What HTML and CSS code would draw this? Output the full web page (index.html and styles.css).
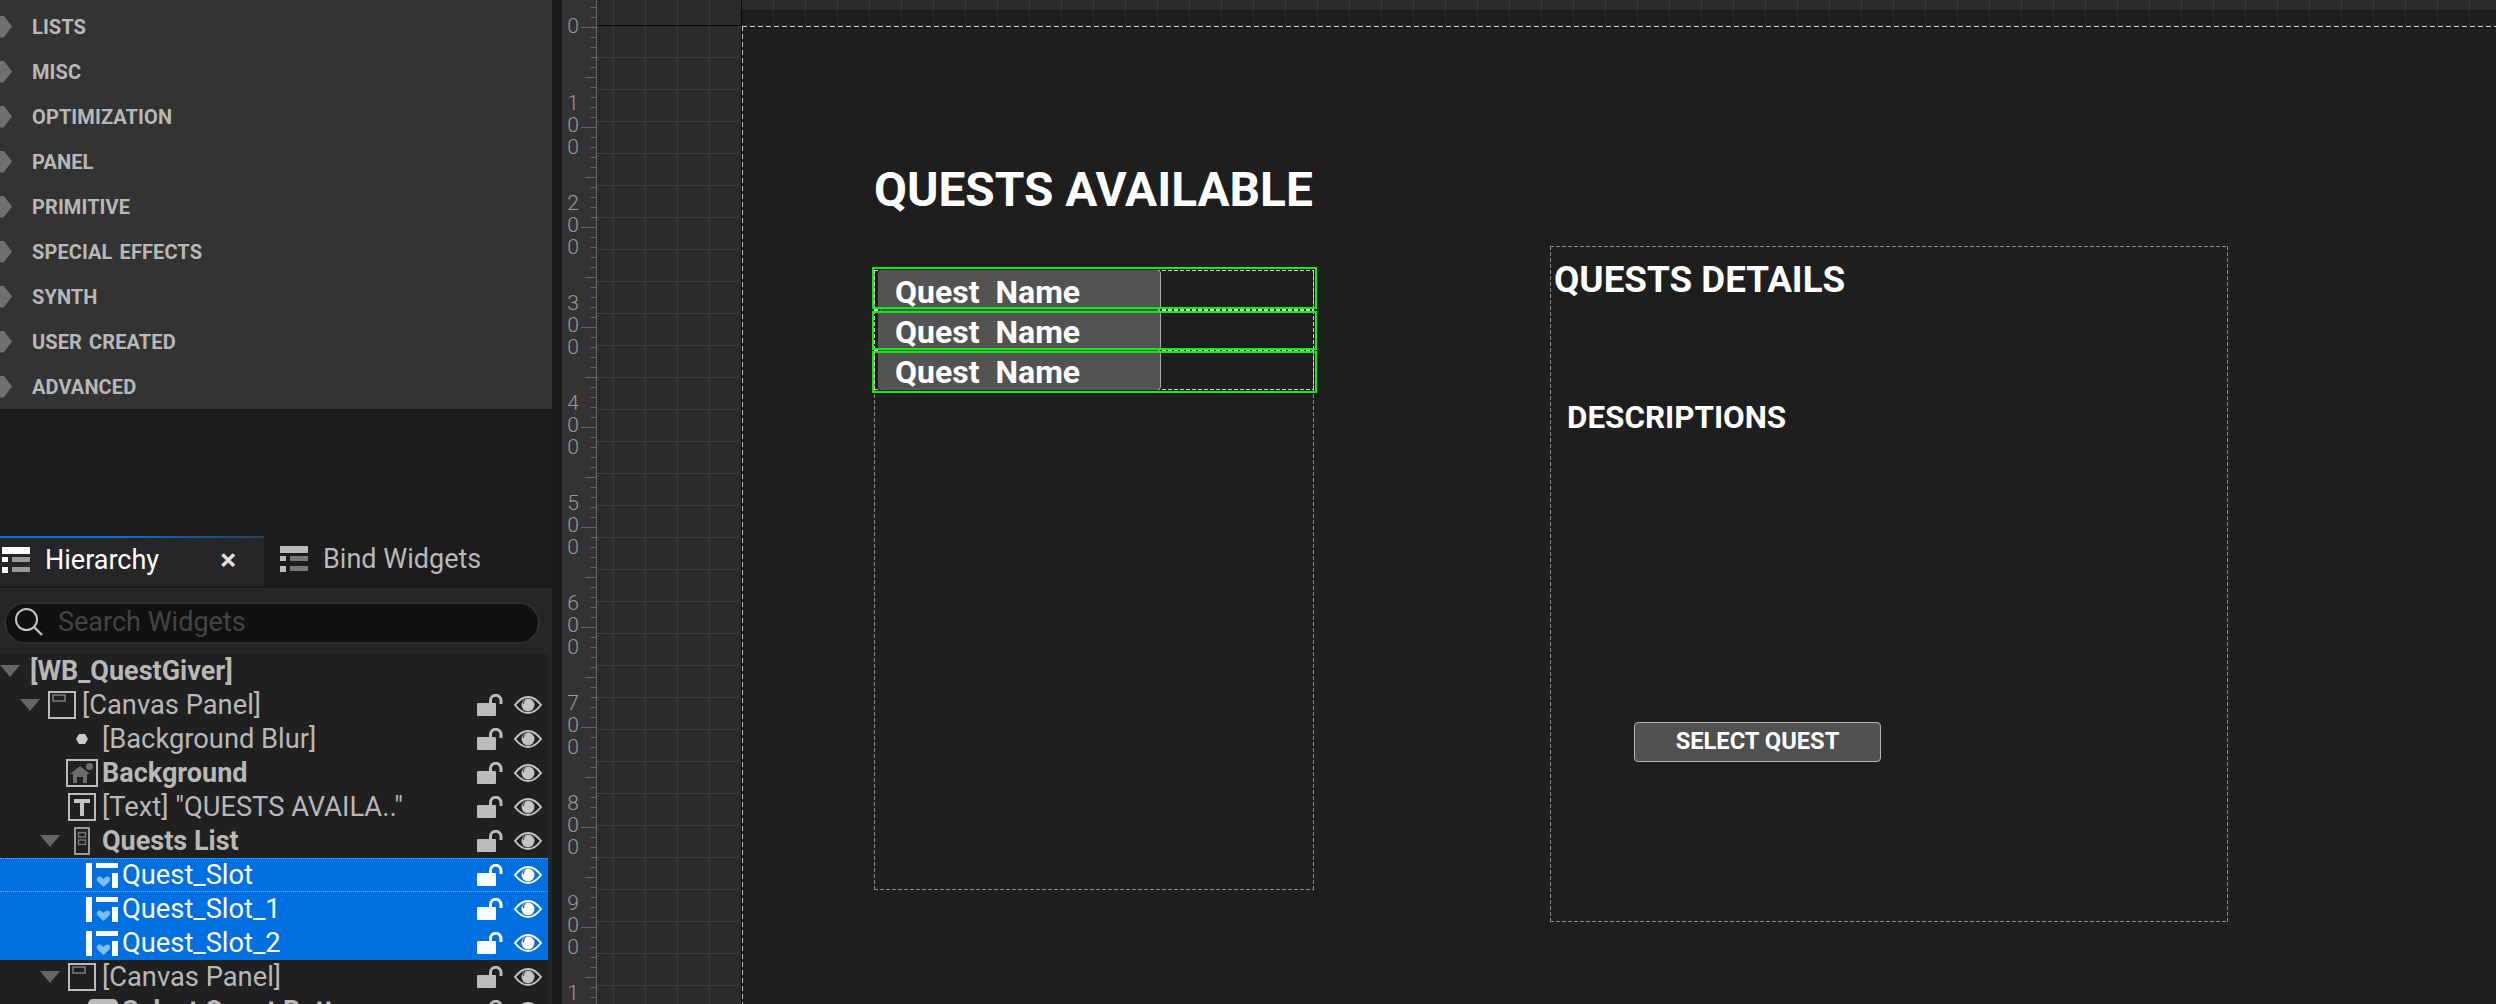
FILE: index.html
```html
<!DOCTYPE html>
<html lang="en">
<head>
<meta charset="utf-8">
<title>WB_QuestGiver</title>
<link rel="stylesheet" href="styles.css">
</head>
<body>
<svg class="defs" width="0" height="0" aria-hidden="true">
  <symbol id="lock" viewBox="0 0 26 22"><rect x="0" y="9" width="19" height="13" rx="1" fill="currentColor"/><path d="M13.500 9V6.500a5 5 0 0 1 10.500 0V10" fill="none" stroke="currentColor" stroke-width="3"/></symbol>
  <symbol id="eye" viewBox="0 0 28 18"><path d="M1 9C6 2.500 10 1 14 1s8 1.500 13 8c-5 6.500-9 8-13 8S6 15.500 1 9z" fill="none" stroke="currentColor" stroke-width="2"/><circle cx="14" cy="9" r="6.500" fill="currentColor"/><path d="M8.500 7.500A6 6 0 0 1 13 2.800 6.500 6.500 0 0 0 10 8.500z" fill="#555"/></symbol>
  <symbol id="list" viewBox="0 0 28 26"><rect x="0" y="0" width="28" height="7" fill="var(--top)"/><rect x="0" y="10" width="6" height="5" fill="var(--top)"/><rect x="0" y="20" width="6" height="6" fill="var(--top)"/><rect x="10" y="10" width="18" height="5" fill="var(--low)"/><rect x="10" y="20" width="18" height="5" fill="var(--low)"/></symbol>
  <symbol id="slot" viewBox="0 0 32 25"><rect x="0" y="0" width="6" height="25" fill="#fff"/><rect x="10" y="0" width="22" height="5" fill="#fff"/><rect x="26" y="10" width="6" height="15" fill="#fff"/><path d="M17.500 24 11.600 18.400C9.500 16 11.800 12.500 14.600 13.800c1.300.5 2.200 1.300 2.900 2.100.7-.8 1.600-1.600 2.900-2.100 2.800-1.300 5.100 2.200 3 4.600z" fill="#7fbcf4"/></symbol>
  <symbol id="panel" viewBox="0 0 28 28"><rect x="1" y="1" width="26" height="26" fill="none" stroke="#bbb" stroke-width="2"/><rect x="5" y="4" width="12" height="6" fill="none" stroke="#777" stroke-width="1.600"/></symbol>
</svg>

<main class="app">
  <aside class="sidebar">
    <nav class="palette">
      <div class="cat"><span class="arrow"></span>LISTS</div>
      <div class="cat"><span class="arrow"></span>MISC</div>
      <div class="cat"><span class="arrow"></span>OPTIMIZATION</div>
      <div class="cat"><span class="arrow"></span>PANEL</div>
      <div class="cat"><span class="arrow"></span>PRIMITIVE</div>
      <div class="cat"><span class="arrow"></span>SPECIAL EFFECTS</div>
      <div class="cat"><span class="arrow"></span>SYNTH</div>
      <div class="cat"><span class="arrow"></span>USER CREATED</div>
      <div class="cat"><span class="arrow"></span>ADVANCED</div>
    </nav>
    <div class="tabs">
      <div class="tab tab-active">
        <svg class="tab-icon icon-bright"><use href="#list"/></svg>
        <span class="tab-label">Hierarchy</span>
        <span class="tab-close">×</span>
      </div>
      <div class="tab tab-idle">
        <svg class="tab-icon icon-dim"><use href="#list"/></svg>
        <span class="tab-label">Bind Widgets</span>
      </div>
    </div>
    <div class="searchbar">
      <div class="search">
        <svg class="search-icon" viewBox="0 0 30 30"><circle cx="12.500" cy="12.500" r="10.500" fill="none" stroke="#c4c4c4" stroke-width="2"/><path d="M20 20l8 8" stroke="#c4c4c4" stroke-width="2.400"/></svg>
        <span class="search-text">Search Widgets</span>
      </div>
    </div>
    <div class="tree">
      <div class="row">
        <div class="lead lead-root"><span class="tri"></span></div>
        <span class="name bold">[WB_QuestGiver]</span>
      </div>
      <div class="row">
        <div class="lead lead-83"><span class="tri tri-1"></span><svg class="ic-panel ic-after-tri1"><use href="#panel"/></svg></div>
        <span class="name">[Canvas Panel]</span>
        <div class="acts"><svg class="lock"><use href="#lock"/></svg><svg class="eye"><use href="#eye"/></svg></div>
      </div>
      <div class="row">
        <div class="lead lead-103"><span class="blur-dot"></span></div>
        <span class="name">[Background Blur]</span>
        <div class="acts"><svg class="lock"><use href="#lock"/></svg><svg class="eye"><use href="#eye"/></svg></div>
      </div>
      <div class="row">
        <div class="lead lead-103">
          <svg class="ic-image" viewBox="0 0 32 28"><rect x="1" y="1" width="30" height="26" fill="none" stroke="#bbb" stroke-width="2"/><circle cx="23.500" cy="7.500" r="3.500" fill="#6d6d6d"/><path d="M4 15l10-8 10 8h-3v9h-4v-6h-6v6H7v-9z" fill="#6d6d6d"/></svg>
        </div>
        <span class="name bold">Background</span>
        <div class="acts"><svg class="lock"><use href="#lock"/></svg><svg class="eye"><use href="#eye"/></svg></div>
      </div>
      <div class="row">
        <div class="lead lead-103">
          <svg class="ic-text" viewBox="0 0 28 28"><rect x="1" y="1" width="26" height="26" fill="none" stroke="#bbb" stroke-width="2"/><path d="M6 6h16v4h-6v13h-4V10H6z" fill="#c4c4c4"/></svg>
        </div>
        <span class="name">[Text] "QUESTS AVAILA.."</span>
        <div class="acts"><svg class="lock"><use href="#lock"/></svg><svg class="eye"><use href="#eye"/></svg></div>
      </div>
      <div class="row">
        <div class="lead lead-103"><span class="tri tri-2"></span>
          <svg class="ic-vbox" viewBox="0 0 16 28"><rect x="1" y="1" width="14" height="26" fill="none" stroke="#999" stroke-width="2"/><rect x="4.500" y="5.500" width="7" height="4.500" fill="none" stroke="#777" stroke-width="1.400"/><rect x="4.500" y="13" width="7" height="4.500" fill="none" stroke="#777" stroke-width="1.400"/></svg>
        </div>
        <span class="name bold">Quests List</span>
        <div class="acts"><svg class="lock"><use href="#lock"/></svg><svg class="eye"><use href="#eye"/></svg></div>
      </div>
      <div class="row row-sel row-focus">
        <div class="lead lead-122"><svg class="ic-slot"><use href="#slot"/></svg></div>
        <span class="name">Quest_Slot</span>
        <div class="acts"><svg class="lock"><use href="#lock"/></svg><svg class="eye"><use href="#eye"/></svg></div>
      </div>
      <div class="row row-sel">
        <div class="lead lead-122"><svg class="ic-slot"><use href="#slot"/></svg></div>
        <span class="name">Quest_Slot_1</span>
        <div class="acts"><svg class="lock"><use href="#lock"/></svg><svg class="eye"><use href="#eye"/></svg></div>
      </div>
      <div class="row row-sel">
        <div class="lead lead-122"><svg class="ic-slot"><use href="#slot"/></svg></div>
        <span class="name">Quest_Slot_2</span>
        <div class="acts"><svg class="lock"><use href="#lock"/></svg><svg class="eye"><use href="#eye"/></svg></div>
      </div>
      <div class="row">
        <div class="lead lead-103"><span class="tri tri-2"></span><svg class="ic-panel ic-after-tri2"><use href="#panel"/></svg></div>
        <span class="name">[Canvas Panel]</span>
        <div class="acts"><svg class="lock"><use href="#lock"/></svg><svg class="eye"><use href="#eye"/></svg></div>
      </div>
      <div class="row">
        <div class="lead lead-122"><span class="ic-button"></span></div>
        <span class="name bold">Select Quest Button</span>
        <div class="acts"><svg class="lock"><use href="#lock"/></svg><svg class="eye"><use href="#eye"/></svg></div>
      </div>
    </div>
  </aside>

  <div class="gutter"></div>

  <div class="ruler">
    <div class="mark mark-0">0</div>
    <div class="mark">1<br>0<br>0</div>
    <div class="mark">2<br>0<br>0</div>
    <div class="mark">3<br>0<br>0</div>
    <div class="mark">4<br>0<br>0</div>
    <div class="mark">5<br>0<br>0</div>
    <div class="mark">6<br>0<br>0</div>
    <div class="mark">7<br>0<br>0</div>
    <div class="mark">8<br>0<br>0</div>
    <div class="mark mark-900">9<br>0<br>0</div>
    <div class="mark">1<br>0<br>0<br>0</div>
  </div>

  <section class="canvas">
    <div class="guide-h"></div>
    <div class="guide-v"></div>
    <div class="strip"></div>
    <div class="design">
      <h1 class="title">QUESTS AVAILABLE</h1>
      <div class="quest-list dash">
        <div class="slot slot-a dash-light"><div class="slot-btn">Quest  Name</div></div>
        <div class="slot slot-b dash-light"><div class="slot-btn">Quest  Name</div></div>
        <div class="slot slot-c dash-light"><div class="slot-btn">Quest  Name</div></div>
      </div>
      <div class="details dash">
        <h2 class="details-title">QUESTS DETAILS</h2>
        <p class="details-desc">DESCRIPTIONS</p>
        <div class="select-btn">SELECT QUEST</div>
      </div>
    </div>
  </section>
</main>
</body>
</html>
```
FILE: styles.css
```css
* { box-sizing: border-box; }
html, body { margin: 0; height: 100%; }
body {
  background: #1c1c1c;
  font-family: Roboto, "Liberation Sans", sans-serif;
  overflow: hidden;
}
.defs { position: absolute; }

.app { display: flex; height: 1004px; overflow: hidden; }

/* Sidebar */
.sidebar { width: 552px; flex: none; display: flex; flex-direction: column; background: #1c1c1c; }
.palette { height: 409px; flex: none; background: #333; padding-top: 4px; }
.cat {
  height: 45px; display: flex; align-items: center; white-space: pre;
  color: #b8b8b8; font-size: 20px; font-weight: 700; letter-spacing: .1px; word-spacing: 2px;
}
.arrow {
  width: 12px; height: 22px; margin-right: 20px; flex: none;
  background: #707070;
  clip-path: polygon(0 0, 30% 0, 100% 50%, 30% 100%, 0 100%);
}

.tabs { margin-top: 127px; height: 52px; flex: none; display: flex; }
.tab { display: flex; align-items: center; height: 50px; padding-bottom: 5px; }
.tab-active {
  width: 264px; padding-left: 2px; background: #262626;
  border-top: 2px solid; border-image: linear-gradient(90deg, #0070e0 0%, #0070e0 45%, #23415e 100%) 1;
  color: #fff;
}
.tab-idle { padding-left: 16px; color: #b8b8b8; }
.tab-icon { width: 28px; height: 26px; flex: none; margin-right: 15px; }
.icon-bright { --top: #fff; --low: #999; }
.icon-dim { --top: #bbb; --low: #777; }
.tab-label { font-size: 27px; white-space: nowrap; }
.tab-close { margin-left: 61px; font-size: 30px; font-weight: 700; color: #ddd; line-height: 1; }

.searchbar { height: 66px; flex: none; background: #262626; padding: 14px 12px 10px 4px; }
.search {
  height: 42px; border-radius: 21px; background: #111;
  border: 2px solid #2f2f2f; display: flex; align-items: center; padding-left: 8px; padding-bottom: 2px;
}
.search-icon { width: 30px; height: 30px; flex: none; margin-right: 14px; }
.search-text { color: #444; font-size: 27px; }

.tree { flex: 1; background: #202020; border-right: 4px solid #262626; overflow: hidden; }
.row { height: 34px; display: flex; align-items: center; color: #b8b8b8; position: relative; }
.row-sel { background: #0070e0; color: #fff; }
.row-focus { border-top: 1px dotted #e0922a; border-bottom: 1px dotted #e0922a; }
.lead { flex: none; height: 100%; display: flex; align-items: center; }
.lead-root { width: 30px; }
.lead-83 { width: 82px; }
.lead-103 { width: 102px; }
.lead-122 { width: 122px; }
.name { font-size: 27.300px; white-space: nowrap; }
.bold { font-weight: 700; font-size: 27px; }
.acts { margin-left: auto; display: flex; align-items: center; padding-right: 6px; }
.lock { width: 26px; height: 22px; margin-right: 11px; color: #bcbcbc; }
.eye { width: 28px; height: 18px; color: #c4c4c4; }
.row-sel .lock, .row-sel .eye { color: #fff; }

.tri { width: 20px; height: 12px; flex: none; background: #666; clip-path: polygon(0 0, 100% 0, 50% 100%); }
.tri-1 { margin-left: 20px; }
.tri-2 { margin-left: 40px; }
.ic-panel { width: 28px; height: 28px; flex: none; }
.ic-after-tri1 { margin-left: 8px; }
.ic-after-tri2 { margin-left: 8px; }
.blur-dot { width: 12px; height: 12px; margin-left: 76px; background: #ccc; clip-path: polygon(25% 8%, 75% 8%, 100% 50%, 75% 92%, 25% 92%, 0 50%); }
.ic-image { width: 32px; height: 28px; margin-left: 66px; }
.ic-text { width: 28px; height: 28px; margin-left: 68px; }
.ic-vbox { width: 16px; height: 28px; margin-left: 14px; }
.ic-slot { width: 32px; height: 25px; margin-left: 86px; }
.ic-button { width: 30px; height: 24px; margin-left: 88px; background: #bbb; border-radius: 5px; }

/* Ruler */
.gutter { width: 10px; flex: none; background: #1a1a1a; }
.ruler {
  width: 35px; flex: none; color: #9a9a9a; font-size: 21px; font-weight: 300; line-height: 22px; text-align: center;
  padding-right: 12px; border-right: 1px solid #6a6a6a;
  background-color: #333;
  background-image:
    linear-gradient(#666 1px, transparent 1px),
    linear-gradient(#666 1px, transparent 1px),
    linear-gradient(#666 1px, transparent 1px);
  background-repeat: repeat-y;
  background-size: 5px 10px, 11px 100px, 15px 100px;
  background-position: right 0 top 7px, right 0 top 77px, right 0 top 27px;
}
.mark { height: 100px; }
.mark-0 { height: 77px; margin-top: 15px; }
.mark-900 { height: 90px; }

/* Canvas */
.canvas {
  flex: 1; position: relative;
  background-color: #2b2b2b;
  background-image:
    linear-gradient(90deg, #3a3a3a 1px, transparent 1px),
    linear-gradient(#3a3a3a 1px, transparent 1px);
  background-size: 32px 32px;
  background-position: 16px 0, 0 25px;
}
.guide-h { position: absolute; left: 0; top: 25px; width: 144px; height: 1px; background: #0a0a0a; }
.guide-v { position: absolute; left: 144px; top: 0; bottom: 0; width: 1px; background: #0a0a0a; }
.strip { position: absolute; left: 145px; right: 0; top: 10px; height: 16px; background: rgba(0,0,0,.3); }
.design {
  position: absolute; left: 145px; top: 26px; right: 0; bottom: 0;
  background-color: #1e1e1e;
  background-image:
    repeating-linear-gradient(90deg, #c8c8c8 0 5px, transparent 5px 8px),
    repeating-linear-gradient(180deg, #c8c8c8 0 5px, transparent 5px 8px);
  background-repeat: no-repeat;
  background-size: 100% 1px, 1px 100%;
  background-position: 0 0, 0 0;
}

.dash, .dash-light {
  --d: #8a8a8a;
  background-image:
    repeating-linear-gradient(90deg, var(--d) 0 4px, transparent 4px 6px),
    repeating-linear-gradient(90deg, var(--d) 0 4px, transparent 4px 6px),
    repeating-linear-gradient(0deg, var(--d) 0 4px, transparent 4px 6px),
    repeating-linear-gradient(0deg, var(--d) 0 4px, transparent 4px 6px);
  background-repeat: no-repeat;
  background-size: 100% 1px, 100% 1px, 1px 100%, 1px 100%;
  background-position: 0 0, 0 100%, 0 0, 100% 0;
}
.dash-light { --d: #d0d0d0; }

.title {
  position: absolute; left: 132px; top: 134px; margin: 0;
  color: #fff; font-size: 47.800px; font-weight: 700; line-height: 60px; white-space: nowrap;
}
.quest-list { position: absolute; left: 132px; top: 244px; width: 440px; height: 620px; }
.slot { position: relative; height: 40px; padding-left: 4px; }
.slot::after { content: ""; position: absolute; left: -2px; right: -3px; border: 2px solid #10ee10; pointer-events: none; }
.slot-a::after { top: -3px; bottom: 1px; }
.slot-b::after { top: 1px; bottom: 0; }
.slot-c::after { top: 1px; bottom: -3px; }
.slot-btn {
  width: 283px; height: 100%; background: #535353; border-right: 1px solid #a8a8a8; border-radius: 4px;
  padding-left: 17px; color: #fff; font-size: 32px; font-weight: 700; line-height: 45px; white-space: pre;
  overflow: hidden;
}
.details { position: absolute; left: 808px; top: 220px; width: 678px; height: 676px; }
.details-title {
  position: absolute; left: 4px; top: 12px; margin: 0;
  color: #fff; font-size: 36.800px; font-weight: 700; line-height: 44px; white-space: nowrap;
}
.details-desc {
  position: absolute; left: 17px; top: 154px; margin: 0;
  color: #fff; font-size: 31.400px; font-weight: 700; line-height: 36px; white-space: nowrap;
}
.select-btn {
  position: absolute; left: 84px; top: 476px; width: 247px; height: 40px; padding-bottom: 2px;
  background: #505050; border: 1px solid #b4b4b4; border-radius: 4px;
  color: #fff; font-size: 23.700px; font-weight: 700; display: flex; align-items: center; justify-content: center;
}
```
